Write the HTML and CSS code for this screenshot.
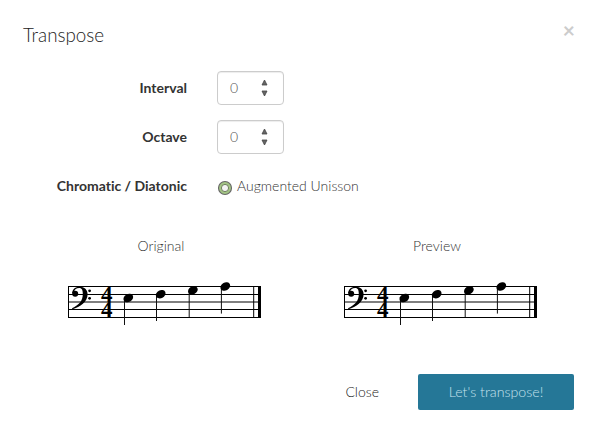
FILE: index.html
```
<!DOCTYPE html>
<html lang="en">

<head>
    <meta charset="UTF-8">
    <meta name="viewport" content="width=device-width, initial-scale=1.0">
    <title>Transpose</title>
    <link rel="stylesheet" href="styles.css">
</head>

<body>
    <!-- Shared by the two scores -->
    <svg class="defs" width="0" height="0">
        <defs>
            <g id="score">
                <path d="M8 11.5H201M8 42.5H201" stroke="#000" stroke-width="1.2"/>
                <path d="M8 19.5H201M8 34.5H201" stroke="#000" stroke-width="1"/>
                <path d="M8 27H201" stroke="#555" stroke-width="1.3"/>
                <path d="M8.5 11V43" stroke="#000" stroke-width="1"/>
                <!-- bass clef -->
                <circle cx="15.2" cy="18.7" r="3"/>
                <path d="M12.2 18.6C12.1 14.3 15.5 11.7 19.5 11.7C24.5 11.7 27.6 14.8 27.6 19.2C27.6 26.8 20.2 31.8 12.4 34.2L12 33.2C19 29.8 22.8 26 22.8 19C22.8 15 22 12.9 19.2 12.9C16.4 12.9 14.4 14.4 13.9 17.2Z"/>
                <circle cx="29.6" cy="15.8" r="1.4"/>
                <circle cx="29.6" cy="23.3" r="1.4"/>
                <!-- time signature -->
                <text class="meter" x="40.9" y="26.8">4</text>
                <text class="meter" x="40.9" y="42.3">4</text>
                <!-- notes -->
                <path d="M64.5 24V50M96.5 20V46M129.2 16V42M161.4 12V38.6" stroke="#111" stroke-width="1"/>
                <ellipse cx="68.3" cy="23" rx="5.1" ry="3.9" transform="rotate(-28 68.3 23)"/>
                <ellipse cx="100.7" cy="19.2" rx="5.1" ry="3.9" transform="rotate(-28 100.7 19.2)"/>
                <ellipse cx="132.9" cy="15.3" rx="5.1" ry="3.9" transform="rotate(-28 132.9 15.3)"/>
                <ellipse cx="165.3" cy="11.5" rx="5.1" ry="3.9" transform="rotate(-28 165.3 11.5)"/>
                <!-- final bar -->
                <path d="M193.7 11V43" stroke="#000" stroke-width="1"/>
                <path d="M198 11H201V43H198Z"/>
            </g>
        </defs>
    </svg>

    <div class="modal">
        <div class="modal-header">
            <h4>Transpose</h4>
            <button type="button" class="close">×</button>
        </div>

        <form class="modal-body">
            <div class="form-group">
                <label>Interval</label>
                <div class="number">
                    <span>0</span>
                    <svg width="7" height="18" viewBox="0 0 7 18">
                        <path d="M3.5 1L6 6H1Z M3.5 17L6 12H1Z"/>
                    </svg>
                </div>
            </div>
            <div class="form-group">
                <label>Octave</label>
                <div class="number">
                    <span>0</span>
                    <svg width="7" height="18" viewBox="0 0 7 18">
                        <path d="M3.5 1L6 6H1Z M3.5 17L6 12H1Z"/>
                    </svg>
                </div>
            </div>
            <div class="form-group">
                <label>Chromatic / Diatonic</label>
                <div class="radio">
                    <svg width="16" height="16" viewBox="0 0 16 16">
                        <circle cx="8" cy="8" r="6.5" fill="#a3c585" stroke="#666" stroke-width="1.1"/>
                        <circle cx="8" cy="8" r="3.6" fill="#f4f4f4" stroke="#70805f" stroke-width="1"/>
                    </svg>
                    <span>Augmented Unisson</span>
                </div>
            </div>

            <div class="scores">
                <div class="score">
                    <p>Original</p>
                    <svg width="210" height="55"><use href="#score"/></svg>
                </div>
                <div class="score">
                    <p>Preview</p>
                    <svg width="210" height="55"><use href="#score"/></svg>
                </div>
            </div>
        </form>

        <div class="modal-footer">
            <button type="button" class="btn">Close</button>
            <button type="button" class="btn btn-primary">Let's transpose!</button>
        </div>
    </div>
</body>

</html>
```
FILE: styles.css
```
* {
    box-sizing: border-box;
}

body {
    margin: 0;
    background: #fff;
    color: #333;
    font-family: Lato, sans-serif;
    font-size: 14px;
    font-weight: 300;
    line-height: 20px;
    font-variant-ligatures: none;
}

.defs {
    display: block;
}

.modal {
    height: 442px;
    padding: 22px 23px 23px;
}

.modal-header {
    display: flex;
    justify-content: space-between;
    height: 49px;
}

h4 {
    margin: 0;
    color: #222;
    font-size: 18.8px;
    font-weight: 300;
    line-height: 26px;
}

button {
    border: 0;
    background: none;
    font-family: inherit;
}

.close {
    height: 16px;
    margin-right: -1px;
    padding: 0;
    color: #ccc;
    font-size: 21px;
    font-weight: 700;
    line-height: 16px;
}

.form-group {
    display: flex;
    align-items: center;
    gap: 30px;
    height: 34px;
    margin-bottom: 15px;
}

label {
    width: 164px;
    color: #333;
    font-weight: 700;
    text-align: right;
}

.number {
    display: flex;
    align-items: center;
    justify-content: space-between;
    width: 67px;
    height: 34px;
    padding: 0 15px 0 12px;
    border: 1px solid #ccc;
    border-radius: 4px;
    box-shadow: inset 0 1px 1px rgba(0, 0, 0, .075);
    color: #555;
}

.number svg {
    fill: #666;
    stroke: #444;
    stroke-width: .8;
}

.radio {
    display: flex;
    gap: 4px;
}

.radio svg {
    margin-top: 4px;
}

.scores {
    display: grid;
    grid-template-columns: 276px 276px;
    margin-top: 33px;
}

.score p {
    margin: 0 0 19px;
    text-align: center;
}

.score svg {
    display: block;
    margin-left: 37px;
}

.meter {
    font-family: "Liberation Serif", serif;
    font-size: 23px;
    font-weight: 700;
}

.modal-footer {
    display: flex;
    justify-content: flex-end;
    margin-top: 44px;
}

.btn {
    height: 36px;
    padding: 0 39px;
    border-radius: 2px;
    color: #222;
    font-size: 14px;
    font-weight: 300;
    line-height: 36px;
}

.btn-primary {
    width: 156px;
    padding: 0;
    background: #257797;
    color: #c5e2ed;
    font-size: 14.2px;
}
```
